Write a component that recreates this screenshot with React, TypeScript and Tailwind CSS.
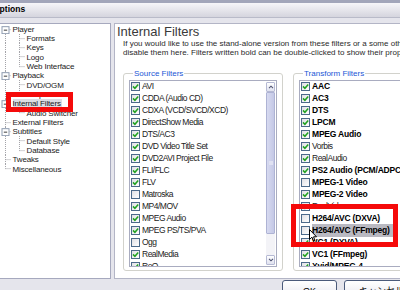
import React from "react";

type FilterItem = { label: string; checked: boolean; bold?: boolean; selected?: boolean };
type TreeNode = { label: string; level: 0 | 1; box?: boolean; first?: boolean; last?: boolean; lastChild?: boolean; selected?: boolean };

const sourceFilters: FilterItem[] = [
  { label: "AVI", checked: true },
  { label: "CDDA (Audio CD)", checked: true },
  { label: "CDXA (VCD/SVCD/XCD)", checked: true },
  { label: "DirectShow Media", checked: true },
  { label: "DTS/AC3", checked: true },
  { label: "DVD Video Title Set", checked: true },
  { label: "DVD2AVI Project File", checked: true },
  { label: "FLI/FLC", checked: true },
  { label: "FLV", checked: true },
  { label: "Matroska", checked: false },
  { label: "MP4/MOV", checked: true },
  { label: "MPEG Audio", checked: true },
  { label: "MPEG PS/TS/PVA", checked: true },
  { label: "Ogg", checked: false },
  { label: "RealMedia", checked: true },
  { label: "RoQ", checked: true },
];

const transformFilters: FilterItem[] = [
  { label: "AAC", checked: true, bold: true },
  { label: "AC3", checked: true, bold: true },
  { label: "DTS", checked: true, bold: true },
  { label: "LPCM", checked: true, bold: true },
  { label: "MPEG Audio", checked: true, bold: true },
  { label: "Vorbis", checked: true },
  { label: "RealAudio", checked: true },
  { label: "PS2 Audio (PCM/ADPCM)", checked: true, bold: true },
  { label: "MPEG-1 Video", checked: false, bold: true },
  { label: "MPEG-2 Video", checked: true, bold: true },
  { label: "RealVideo", checked: true },
  { label: "H264/AVC (DXVA)", checked: false, bold: true },
  { label: "H264/AVC (FFmpeg)", checked: false, bold: true, selected: true },
  { label: "VC1 (DXVA)", checked: true, bold: true },
  { label: "VC1 (FFmpeg)", checked: true, bold: true },
  { label: "Xvid/MPEG-4", checked: true, bold: true },
];

const tree: TreeNode[] = [
  { label: "Player", level: 0, box: true, first: true },
  { label: "Formats", level: 1 },
  { label: "Keys", level: 1 },
  { label: "Logo", level: 1 },
  { label: "Web Interface", level: 1, lastChild: true },
  { label: "Playback", level: 0, box: true },
  { label: "DVD/OGM", level: 1 },
  { label: "Output", level: 1, lastChild: true },
  { label: "Internal Filters", level: 0, box: true, selected: true },
  { label: "Audio Switcher", level: 1, lastChild: true },
  { label: "External Filters", level: 0 },
  { label: "Subtitles", level: 0, box: true },
  { label: "Default Style", level: 1 },
  { label: "Database", level: 1, lastChild: true },
  { label: "Tweaks", level: 0 },
  { label: "Miscellaneous", level: 0, last: true },
];

const ROW_H = 9.33;

const TreeGutter = ({ node }: { node: TreeNode }) => {
  const mid = ROW_H / 2;
  const w = node.level === 0 ? 11 : 25;
  return (
    <svg width={w} height={ROW_H} viewBox={`0 0 ${w} ${ROW_H}`} className="shrink-0">
      <g stroke="#a3a3a8" strokeWidth="1" strokeDasharray="1 1" fill="none">
        <line x1="4.5" x2="4.5" y1={node.first ? mid : 0} y2={node.last ? mid : ROW_H} />
        {node.level === 0 && <line x1="4.5" x2="10" y1={mid} y2={mid} />}
        {node.level === 1 && (
          <>
            <line x1="18.5" x2="18.5" y1="0" y2={node.lastChild ? mid : ROW_H} />
            <line x1="18.5" x2="24" y1={mid} y2={mid} />
          </>
        )}
      </g>
      {node.box && (
        <g>
          <rect x="1" y={mid - 3} width="7" height="7" fill="#fff" stroke="#8e9bb0" strokeWidth="1" />
          <line x1="2.8" x2="6.2" y1={mid + 0.5} y2={mid + 0.5} stroke="#3a3a3a" strokeWidth="1" />
        </g>
      )}
    </svg>
  );
};

const CheckBox = ({ checked }: { checked: boolean }) => (
  <span className="flex h-[9px] w-[9px] shrink-0 items-center justify-center border border-[#4c6a8a] bg-gradient-to-br from-[#e0e0e4] to-white">
    {checked && (
      <svg viewBox="0 0 7 7" className="h-[7px] w-[7px]">
        <path d="M1 3.4 L2.9 5.3 L6.2 1.4" stroke="#21a121" strokeWidth="1.5" fill="none" />
      </svg>
    )}
  </span>
);

const FilterRow = ({ item }: { item: FilterItem }) => (
  <div className="flex h-[12px] items-center gap-[2px] whitespace-nowrap">
    <CheckBox checked={item.checked} />
    <span
      className={
        item.bold
          ? `font-bold text-[8.5px] tracking-[-0.2px] text-black ${item.selected ? "bg-[#b9b9c1] pr-[4px]" : ""}`
          : "text-[8.5px] tracking-[-0.5px] text-[#222]"
      }
    >
      {item.label}
    </span>
  </div>
);

const ScrollBar = () => (
  <div className="flex w-[10px] shrink-0 flex-col py-[1px] pr-[1px]">
    <div className="flex h-[10px] items-center justify-center rounded-[1px] border border-[#b6bad4] bg-gradient-to-b from-white to-[#dfe1ef]">
      <svg viewBox="0 0 7 5" className="h-[4px] w-[6px]">
        <path d="M1 4 L3.5 1.5 L6 4" stroke="#4d5270" strokeWidth="1.3" fill="none" />
      </svg>
    </div>
    <div className="flex h-[142px] items-center justify-center rounded-[1px] border border-[#aeb3d4] bg-gradient-to-r from-[#d7daf0] to-[#c4c8e6]">
      <div className="h-[4px] w-[4px] bg-[#dfe1f2]" />
    </div>
    <div className="flex-1 bg-[#f3f3f7]" />
    <div className="flex h-[10px] items-center justify-center rounded-[1px] border border-[#b6bad4] bg-gradient-to-b from-white to-[#dfe1ef]">
      <svg viewBox="0 0 7 5" className="h-[4px] w-[6px]">
        <path d="M1 1 L3.5 3.5 L6 1" stroke="#4d5270" strokeWidth="1.3" fill="none" />
      </svg>
    </div>
  </div>
);

const GroupBox = ({ title, items, scroll, width }: { title: string; items: FilterItem[]; scroll?: boolean; width: string }) => (
  <fieldset className={`${width} shrink-0 rounded-[3px] border border-[#d2d2cc] px-[5px] pb-[3px] pt-[1px]`}>
    <legend className="ml-[4px] px-[1px] text-[8px] leading-[10px] text-[#1a56d6]">{title}</legend>
    <div className="flex h-[187px] border border-[#a9acc0] bg-white">
      <div className="flex-1 overflow-hidden pl-[1px]">
        {items.map((item) => (
          <FilterRow key={item.label} item={item} />
        ))}
      </div>
      {scroll && <ScrollBar />}
    </div>
  </fieldset>
);

export default function App() {
  return (
    <div className="relative h-[290px] w-[400px] overflow-hidden bg-[#e5e5ec] font-['Liberation_Sans',Arial,sans-serif] text-black">
      <div className="h-[18px] border-t-[3px] border-b border-t-[#a2a6ba] border-b-[#b9bbc9] bg-gradient-to-b from-[#f6f6f9] to-[#d5d5de]">
        <div className="-ml-[7px] text-[8.5px] font-bold leading-[13px]">Options</div>
      </div>

      <div className="flex gap-[3px] pt-[5px]">
        <div className="-ml-[2px] h-[256px] w-[113px] shrink-0 border border-[#a6a9be] bg-white pl-[2px] pt-[0.5px]">
          {tree.map((node) => (
            <div key={node.label} className="flex h-[9.33px] items-center whitespace-nowrap">
              <TreeGutter node={node} />
              <span
                className={`ml-[0.5px] text-[8px] leading-[9px] tracking-[-0.15px] text-[#1a1a1a] ${node.selected ? "bg-[#dcdce3] pr-[1px]" : ""}`}
              >
                {node.label}
              </span>
            </div>
          ))}
        </div>

        <div className="h-[256px] w-[330px] shrink-0 border border-[#b3b5c6] bg-white">
          <div className="pl-[2px] pt-[1px] text-[13px] leading-[14px] text-[#3a3a3a]">Internal Filters</div>
          <div className="whitespace-nowrap pl-[8px] text-[8px] leading-[9.4px] text-[#2a2a2a]">
            <div>If you would like to use the stand-alone version from these filters or a some other filter, you can</div>
            <div>disable them here. Filters written bold can be double-clicked to show their property pages.</div>
          </div>
          <div className="mt-[11px] flex items-start gap-[10px] pl-[8px]">
            <GroupBox title="Source Filters" items={sourceFilters} scroll width="w-[160px]" />
            <GroupBox title="Transform Filters" items={transformFilters} width="w-[200px]" />
          </div>
        </div>
      </div>

      <div className="mt-[1px] flex gap-[7px] pl-[282px]">
        <div className="flex h-[20px] w-[55px] shrink-0 justify-center rounded-[3px] border border-[#4a5a7a] bg-gradient-to-b from-white to-[#e6e6ee] pt-[4px] text-[9px]">
          OK
        </div>
        <div className="flex h-[20px] w-[75px] shrink-0 justify-center rounded-[3px] border border-[#4a5a7a] bg-gradient-to-b from-white to-[#e6e6ee] pt-[3px] font-['Noto_Sans_CJK_JP',sans-serif] text-[9px]">
          キャンセル
        </div>
      </div>

      <svg viewBox="0 0 8 13" className="absolute left-[309px] top-[229px] h-[13px] w-[8px]">
        <path d="M0.5 0.5 L0.5 10.5 L3 8.2 L4.6 12 L6 11.4 L4.5 7.8 L7.5 7.8 Z" fill="#fff" stroke="#000" strokeWidth="1" />
      </svg>

      <div className="absolute left-[6px] top-[92px] h-[20px] w-[67px] border-[5px] border-[#f50a0a]" />
      <div className="absolute left-[291px] top-[204px] h-[43px] w-[107px] border-[5px] border-[#f50a0a]" />
    </div>
  );
}
